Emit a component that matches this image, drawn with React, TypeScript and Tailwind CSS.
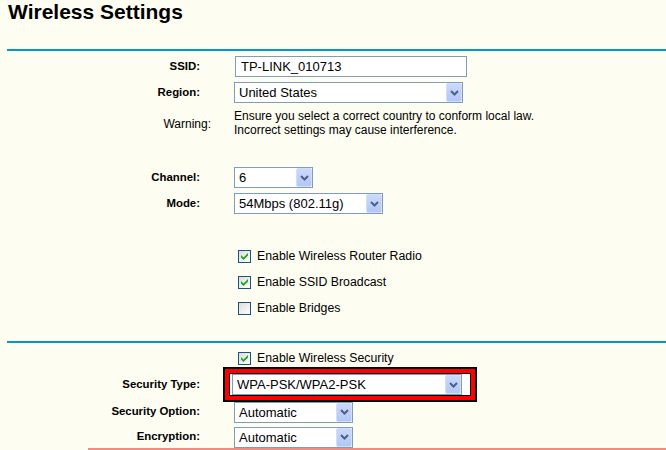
import type { ReactNode } from 'react';

function Arrow() {
  return (
    <svg width="9" height="6" viewBox="0 0 9 6">
      <path d="M1 1 L4.5 4.5 L8 1" fill="none" stroke="#4d6185" strokeWidth="2" />
    </svg>
  );
}

function Select({ value, w }: { value: string; w: string }) {
  return (
    <div className={`flex h-[21px] items-stretch border border-[#7f9db9] bg-white ${w}`}>
      <span className="flex flex-1 items-center pl-[4px] text-[13px] leading-none text-black">{value}</span>
      <span className="flex w-[16px] items-center justify-center rounded-[2px] border border-[#d3defb] bg-linear-to-b from-[#cbd9fc] to-[#b3c6f5]">
        <Arrow />
      </span>
    </div>
  );
}

function Check({ checked }: { checked: boolean }) {
  return (
    <span className="flex h-[13px] w-[13px] items-center justify-center border border-[#1c5180] bg-linear-to-br from-[#dcdcd7] to-white">
      {checked && (
        <svg width="7" height="7" viewBox="0 0 7 7">
          <polygon points="0,2 2.5,4.5 7,0 7,2.5 2.5,7 0,4.5" fill="#21a121" />
        </svg>
      )}
    </span>
  );
}

function Row({ label, children, className = '' }: { label?: ReactNode; children: ReactNode; className?: string }) {
  return (
    <div className={`flex items-center ${className}`}>
      <div className="w-[200px] text-right text-[11.4px] font-bold text-black">{label}</div>
      <div className="ml-[34px] flex items-center">{children}</div>
    </div>
  );
}

function CheckRow({ label, checked, className = '' }: { label: string; checked: boolean; className?: string }) {
  return (
    <Row className={className}>
      <span className="ml-[4px]">
        <Check checked={checked} />
      </span>
      <span className="ml-[6px] text-[12.3px] text-black">{label}</span>
    </Row>
  );
}

export default function App() {
  return (
    <div className="h-[450px] w-[666px] overflow-hidden bg-[#fdfdf2] font-['Liberation_Sans',Arial,sans-serif]">
      <h1 className="pl-[8px] text-[21px] leading-[24px] font-bold text-black">Wireless Settings</h1>
      <div className="mt-[25px] ml-[7px] h-[2px] bg-[#0099cc]" />

      <Row label="SSID:" className="mt-[5px] h-[21px]">
        <div className="ml-[1px] flex h-[21px] w-[232px] items-center border border-[#7f9db9] bg-white pl-[5px] text-[13px] text-black">
          TP-LINK_010713
        </div>
      </Row>
      <Row label="Region:" className="mt-[5px] h-[21px]">
        <Select value="United States" w="w-[229px]" />
      </Row>
      <div className="mt-[6px] flex items-center">
        <div className="w-[200px] text-right">
          <span className="-mr-[11px] text-[12px] text-black">Warning:</span>
        </div>
        <div className="ml-[34px] text-[12px] leading-[14px] text-black">
          Ensure you select a correct country to conform local law.
          <br />
          Incorrect settings may cause interference.
        </div>
      </div>

      <Row label="Channel:" className="mt-[30px] h-[21px]">
        <Select value="6" w="w-[79px]" />
      </Row>
      <Row label="Mode:" className="mt-[5px] h-[21px]">
        <Select value="54Mbps (802.11g)" w="w-[149px]" />
      </Row>

      <CheckRow label="Enable Wireless Router Radio" checked className="mt-[29px] h-[26px]" />
      <CheckRow label="Enable SSID Broadcast" checked className="h-[26px]" />
      <CheckRow label="Enable Bridges" checked={false} className="h-[26px]" />

      <div className="mt-[20px] ml-[7px] h-[2px] bg-[#0099cc]" />

      <CheckRow label="Enable Wireless Security" checked className="mt-[6px] h-[18px]" />
      <Row label="Security Type:" className="h-[35px]">
        <div className="-ml-[11px] border-2 border-black">
          <div className="border-4 border-[#ff0000]">
            <div className="w-[242px] border border-black bg-white pl-[2px]">
              <Select value="WPA-PSK/WPA2-PSK" w="w-[230px]" />
            </div>
          </div>
        </div>
      </Row>
      <Row label="Security Option:" className="h-[20px]">
        <Select value="Automatic" w="w-[119px]" />
      </Row>
      <Row label="Encryption:" className="mt-[5px] h-[20px]">
        <Select value="Automatic" w="w-[119px]" />
      </Row>
      <div className="mt-[1px] ml-[88px] h-[2px] bg-[#f38b80]" />
    </div>
  );
}
